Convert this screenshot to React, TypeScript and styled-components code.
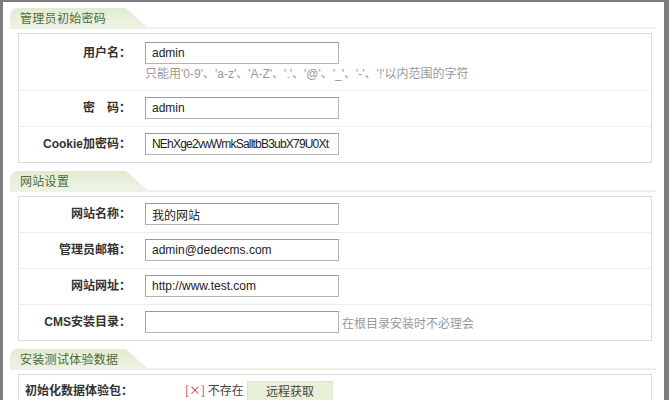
import styled, { createGlobalStyle } from "styled-components";

const GlobalStyle = createGlobalStyle`
    html, body {
        margin: 0;
        padding: 0;
        background: #ffffff;
    }
    body {
        font-family: "Liberation Sans", "Noto Sans CJK SC", sans-serif;
        font-size: 12px;
        color: #333;
    }
`;

type Field = {
    label: string;
    value?: string;
    hint?: string;
    side?: string;
    tight?: boolean;
};

const adminFields: Field[] = [
    { label: "用户名：", value: "admin", hint: "只能用'0-9'、'a-z'、'A-Z'、'.'、'@'、'_'、'-'、'!'以内范围的字符" },
    { label: "密　码：", value: "admin" },
    { label: "Cookie加密码：", value: "NEhXge2vwWmkSalltbB3ubX79U0Xt", tight: true },
];

const siteFields: Field[] = [
    { label: "网站名称：", value: "我的网站" },
    { label: "管理员邮箱：", value: "admin@dedecms.com" },
    { label: "网站网址：", value: "http://www.test.com" },
    { label: "CMS安装目录：", value: "", side: "在根目录安装时不必理会" },
];

const FormRows = ({ fields }: { fields: Field[] }) => (
    <Table>
        {fields.map((f) => (
            <Row key={f.label} $tall={!!f.hint}>
                <Label>{f.label}</Label>
                <Cell>
                    <InputLine>
                        <Input defaultValue={f.value} $tight={!!f.tight} />
                        {f.side && <Side>{f.side}</Side>}
                    </InputLine>
                    {f.hint && <Hint>{f.hint}</Hint>}
                </Cell>
            </Row>
        ))}
    </Table>
);

export default function App() {
    return (
        <>
            <GlobalStyle />
            <Frame>
                <Section>
                    <Head><Tab>管理员初始密码</Tab></Head>
                    <FormRows fields={adminFields} />
                </Section>
                <Section>
                    <Head><Tab>网站设置</Tab></Head>
                    <FormRows fields={siteFields} />
                </Section>
                <Section>
                    <Head><Tab>安装测试体验数据</Tab></Head>
                    <Table>
                        <DataRow>
                            <DataLabel>初始化数据体验包：</DataLabel>
                            <Status><Cross>[×]</Cross> 不存在</Status>
                            <FetchButton>远程获取</FetchButton>
                        </DataRow>
                    </Table>
                </Section>
            </Frame>
        </>
    );
}

const Frame = styled.div`
    box-sizing: border-box;
    width: 669px;
    height: 400px;
    overflow: hidden;
    border-left: 3px solid #7d7d7d;
    border-top: 2px solid #7d7d7d;
    border-right: 5px solid #7d7d7d;
    padding: 6px 12px 0 7px;
    display: flex;
    flex-direction: column;
    gap: 8px;
`;

const Section = styled.section`
    display: flex;
    flex-direction: column;
`;

const Head = styled.div`
    height: 19px;
    border-bottom: 2px solid #eef2e6;
    margin-right: -4px;
`;

const Tab = styled.div`
    width: 137px;
    height: 19px;
    box-sizing: border-box;
    padding-left: 10px;
    line-height: 19px;
    font-family: "Noto Sans CJK SC", sans-serif;
    font-size: 12px;
    letter-spacing: 0.3px;
    color: #4f6a40;
    background: linear-gradient(to bottom, #e1ecd1, #edf3e3);
    border-top-left-radius: 8px;
    clip-path: polygon(0 0, 116px 0, 100% 100%, 0 100%);
`;

const Table = styled.div`
    margin: 4px 0 0 8px;
    border: 1px solid #dcdcdc;
    display: flex;
    flex-direction: column;
`;

const Row = styled.div<{ $tall: boolean }>`
    display: grid;
    grid-template-columns: 112px 1fr;
    column-gap: 14px;
    box-sizing: border-box;
    height: ${(p) => (p.$tall ? "57px" : "36px")};
    padding-top: ${(p) => (p.$tall ? "8px" : "6px")};
    border-bottom: 1px solid #eeeeee;
    &:last-child {
        border-bottom: none;
        height: ${(p) => (p.$tall ? "56px" : "35px")};
    }
`;

const Label = styled.div`
    text-align: right;
    line-height: 22px;
    font-family: "Liberation Sans", "Noto Sans CJK SC", sans-serif;
    font-weight: bold;
    font-size: 12px;
    color: #333;
`;

const Cell = styled.div`
    display: flex;
    flex-direction: column;
`;

const InputLine = styled.div`
    display: flex;
    align-items: center;
    gap: 3px;
`;

const Input = styled.input<{ $tight: boolean }>`
    box-sizing: border-box;
    width: 194px;
    height: 22px;
    padding: 0 1px 0 6px;
    border: 1px solid #b4b4b4;
    border-top-color: #999;
    border-left-color: #a4a4a4;
    font-family: "Liberation Sans", "Noto Sans CJK SC", sans-serif;
    font-size: 12px;
    letter-spacing: ${(p) => (p.$tight ? "-0.8px" : "0")};
    color: #222;
    outline: none;
`;

const Side = styled.span`
    font-family: "Noto Sans CJK SC", sans-serif;
    font-size: 12px;
    color: #999;
`;

const Hint = styled.div`
    margin-top: 1px;
    line-height: 18px;
    font-family: "Liberation Sans", "Noto Sans CJK SC", sans-serif;
    font-size: 12px;
    color: #999;
`;

const DataRow = styled.div`
    display: flex;
    align-items: flex-start;
    height: 30px;
    padding: 6px 0 0 6px;
`;

const DataLabel = styled.div`
    width: 160px;
    line-height: 18px;
    font-family: "Noto Sans CJK SC", sans-serif;
    font-weight: bold;
    font-size: 12px;
    color: #333;
`;

const Status = styled.div`
    width: 62px;
    line-height: 18px;
    font-family: "Noto Sans CJK SC", sans-serif;
    font-size: 12px;
    color: #444;
`;

const Cross = styled.span`
    color: #d04040;
`;

const FetchButton = styled.button`
    width: 86px;
    height: 22px;
    margin-top: 0;
    border: 1px solid #dbe5cc;
    background: #e8f0da;
    font-family: "Noto Sans CJK SC", sans-serif;
    font-size: 12px;
    line-height: 18px;
    color: #444;
    padding: 0 0 2px;
`;
